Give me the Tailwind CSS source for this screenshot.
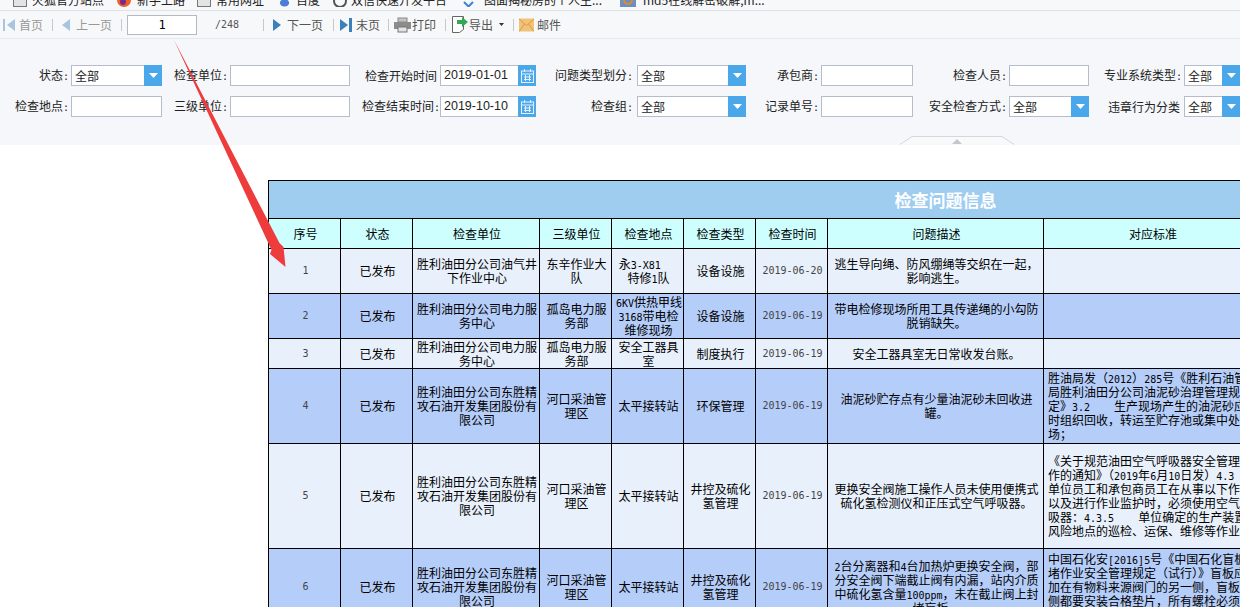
<!DOCTYPE html>
<html lang="zh-CN">

<head>
    <meta charset="UTF-8">
    <title>检查问题信息</title>
    <script src="https://cdn.jsdelivr.net/npm/@tailwindcss/browser@4"></script>
</head>

<body class="font-['Noto_Sans_CJK_SC','Liberation_Sans',sans-serif] bg-white text-black">

    <div class="relative w-[1240px] h-[607px] overflow-hidden">

        <!-- bookmarks bar, cut off by the top of the picture -->
        <div class="h-[11px] bg-[#f7f8fa] border-b border-[#dfe1e5] overflow-hidden">
            <div class="flex items-center h-[14px] -mt-[7px] text-xs leading-[14px] text-[#222] whitespace-nowrap">
                <span class="ml-[13px] w-[14px] h-[13px] bg-[#e3e3e3] border border-[#777]"></span>
                <span class="ml-[5px] w-[85px]">火狐官方站点</span>
                <svg class="w-[14px] h-[14px]" viewBox="0 0 14 14"><circle cx="7" cy="7" r="7" fill="#e8632a"/><circle cx="6" cy="9" r="3" fill="#7b2a8c"/></svg>
                <span class="ml-[6px] w-[60px]">新手上路</span>
                <span class="w-[14px] h-[13px] bg-[#e3e3e3] border border-[#777]"></span>
                <span class="ml-[5px] w-[62px]">常用网址</span>
                <svg class="w-[13px] h-[14px]" viewBox="0 0 14 14"><ellipse cx="7" cy="10" rx="5" ry="4" fill="#4a7fd8"/></svg>
                <span class="ml-[5px] w-[36px]">百度</span>
                <svg class="w-[16px] h-[14px]" viewBox="0 0 16 14"><circle cx="8" cy="8" r="6" fill="none" stroke="#555" stroke-width="2"/></svg>
                <span class="ml-[3px] w-[112px]">双信快速开发平台</span>
                <svg class="w-[11px] h-[14px]" viewBox="0 0 11 14"><path d="M1 9l4.500 4.500L10 9" fill="none" stroke="#3b82d6" stroke-width="2"/></svg>
                <span class="ml-[10px] w-[136px]">图面揭秘房的个人主...</span>
                <span class="w-[16px] h-[13px] bg-[#6d8fc0] flex items-center justify-center"><span class="w-[10px] h-[10px] rounded-full border-2 border-[#e58a2a]"></span></span>
                <span class="ml-[7px]">md5在线解密破解,m...</span>
            </div>
        </div>

        <!-- paging toolbar -->
        <div class="flex items-center h-[28px] bg-[#f7f8fa] border-b border-[#e6e8eb] text-xs leading-none text-[#555]">
            <svg class="ml-[3px] w-[12px] h-[14px]" viewBox="0 0 12 14"><rect x="0" y="1" width="2" height="12" fill="#a9c4de"/><path d="M12 1v12L4 7z" fill="#a9c4de"/></svg>
            <span class="ml-[4px] text-[#999]">首页</span>
            <span class="ml-[9px] w-px h-[12px] bg-[#c8c8c8]"></span>
            <svg class="ml-[9px] w-[8px] h-[14px]" viewBox="0 0 8 14"><path d="M8 1v12L0 7z" fill="#a9c4de"/></svg>
            <span class="ml-[6px] text-[#999]">上一页</span>
            <span class="ml-[9px] w-px h-[12px] bg-[#c8c8c8]"></span>
            <div class="ml-[5px] w-[70px] h-[20px] bg-white border border-[#b5b9c2] flex items-center justify-center font-['DejaVu_Sans_Mono',monospace] text-xs text-black">1</div>
            <span class="ml-[18px] w-[48px] font-['DejaVu_Sans_Mono',monospace] text-[10px]">/248</span>
            <span class="w-px h-[12px] bg-[#c8c8c8]"></span>
            <svg class="ml-[9px] w-[8px] h-[14px]" viewBox="0 0 8 14"><path d="M0 1v12l8-6z" fill="#3d7fb9"/></svg>
            <span class="ml-[6px]">下一页</span>
            <span class="ml-[10px] w-px h-[12px] bg-[#c8c8c8]"></span>
            <svg class="ml-[6px] w-[12px] h-[14px]" viewBox="0 0 12 14"><path d="M0 1v12l8-6z" fill="#3d7fb9"/><rect x="9" y="0" width="3" height="14" fill="#3d7fb9"/></svg>
            <span class="ml-[4px]">末页</span>
            <span class="ml-[8px] w-px h-[12px] bg-[#c8c8c8]"></span>
            <svg class="ml-[5px] w-[17px] h-[16px]" viewBox="0 0 17 16"><rect x="4" y="1" width="9" height="4" fill="#c4c4c4" stroke="#888"/><rect x="0" y="5" width="17" height="7" fill="#8c8c8c"/><rect x="4" y="10" width="9" height="5" fill="#e4e4e4" stroke="#777"/></svg>
            <span class="ml-[1px]">打印</span>
            <span class="ml-[9px] w-px h-[12px] bg-[#c8c8c8]"></span>
            <svg class="ml-[5px] w-[18px] h-[19px]" viewBox="0 0 18 19"><path d="M1.500 1.500h11v13l-4 3h-7z" fill="#fff" stroke="#666"/><path d="M6 5h5V2l6 5-6 5V9H6z" fill="#35a853"/></svg>
            <span>导出</span>
            <svg class="ml-[6px] w-[5px] h-[3px]" viewBox="0 0 5 3"><path d="M0 0h5L2.500 3z" fill="#333"/></svg>
            <span class="ml-[9px] w-px h-[12px] bg-[#c8c8c8]"></span>
            <svg class="ml-[5px] w-[15px] h-[14px]" viewBox="0 0 15 14"><rect x="0" y="0.500" width="15" height="13" fill="#f1c27a"/><path d="M0 1l7.500 6.500L15 1M0 13.500l5.500-7.500M15 13.500l-5.500-7.500" fill="none" stroke="#e29a3c"/></svg>
            <span class="ml-[3px]">邮件</span>
        </div>

        <!-- filter panel -->
        <div class="relative h-[106px] bg-[#f5f7fa] pt-[26px] text-xs leading-none text-[#222]">
            <div class="grid grid-cols-[71px_91px_68px_120px_90px_96px_101px_109px_75px_92px_96px_80px_95px_56px] auto-rows-[21px] gap-y-[10px] items-center" id="filters"></div>

            <svg class="absolute left-[900px] bottom-0 w-[114px] h-[9px]" viewBox="0 0 114 9"><path d="M0 8.500L12 .5h90l12 8" fill="#f8f9fb" stroke="#d5d7da"/><path d="M57 3l5 5H52z" fill="#c5c7ca"/></svg>
        </div>

        <!-- results table -->
        <div class="ml-[268px] mt-[35px] w-[1354px]">
            <table class="table-fixed w-[1354px] border-collapse border border-black text-xs leading-[14px] text-center">
                <colgroup>
                    <col class="w-[72px]"><col class="w-[72px]"><col class="w-[127px]"><col class="w-[72px]"><col class="w-[72px]"><col class="w-[72px]"><col class="w-[72px]"><col class="w-[216px]"><col class="w-[217px]"><col class="w-[362px]">
                </colgroup>
                <thead>
                    <tr class="h-[38px] bg-[#9fcdf0]">
                        <th colspan="10" class="border border-black text-[17px] font-bold text-white">检查问题信息</th>
                    </tr>
                    <tr class="h-[30px] bg-[#ccfffe]">
                        <th class="border border-black font-normal pl-[4px] pr-[2px]">序号</th>
                        <th class="border border-black font-normal pl-[4px] pr-[2px]">状态</th>
                        <th class="border border-black font-normal pl-[4px] pr-[2px]">检查单位</th>
                        <th class="border border-black font-normal pl-[4px] pr-[2px]">三级单位</th>
                        <th class="border border-black font-normal pl-[4px] pr-[2px]">检查地点</th>
                        <th class="border border-black font-normal pl-[4px] pr-[2px]">检查类型</th>
                        <th class="border border-black font-normal pl-[4px] pr-[2px]">检查时间</th>
                        <th class="border border-black font-normal pl-[4px] pr-[2px]">问题描述</th>
                        <th class="border border-black font-normal pl-[4px] pr-[2px]">对应标准</th>
                        <th class="border border-black font-normal pl-[4px] pr-[2px]">整改要求</th>
                    </tr>
                </thead>
                <tbody id="rows"></tbody>
            </table>
        </div>

        <!-- red annotation arrow drawn over the page -->
        <svg class="absolute left-0 top-0 pointer-events-none" width="1240" height="607" viewBox="0 0 1240 607">
            <path d="M174 40L279.500 243L283.500 247L285.500 267L270 254L271.500 250z" fill="#ee3b3b"/>
        </svg>
    </div>

    <script>
        // digits and latin letters are half the width of the Chinese text
        const en = (s) => `<span class="font-['DejaVu_Sans_Mono',monospace] text-[10px] leading-[10px]">${s}</span>`

        // === Filter panel ===
        const label = (text, pad = 'pr-[2px]') => `<div class="text-right ${pad} whitespace-nowrap">${text}</div>`
        const input = () => `<div class="h-[21px] bg-white border border-[#b5bccb]"></div>`
        const select = () => `<div class="h-[21px] flex bg-white border border-[#b5bccb]">
                <span class="flex-1 pl-[3px] leading-[19px] overflow-hidden">全部</span>
                <span class="w-[18px] -my-px -mr-px bg-[#4aa8ea] flex items-center justify-center"><svg class="w-[9px] h-[5px]" viewBox="0 0 9 5"><path d="M0 0h9L4.500 5z" fill="#fff"/></svg></span>
            </div>`
        const date = (value) => `<div class="h-[21px] flex bg-white border border-[#b5bccb]">
                <span class="flex-1 pl-[3px] leading-[19px] font-['Liberation_Sans',sans-serif] text-[12.500px]">${value}</span>
                <span class="w-[18px] -my-px -mr-px bg-[#4aa8ea] flex items-center justify-center"><svg class="w-[13px] h-[14px]" viewBox="0 0 13 14"><rect x=".5" y="2" width="12" height="11.500" fill="none" stroke="#e3f1fc"/><path d="M0 5h13M3 8h7M3 10.500h7M4.500 6v6M8.500 6v6M3.500 0v3M9.500 0v3" stroke="#e3f1fc"/></svg></span>
            </div>`
        const colon = en(':')

        document.getElementById('filters').innerHTML = [
            label('状态' + colon), select(), label('检查单位' + colon), input(), label('检查开始时间', 'pr-[3px]'), date('2019-01-01'),
            label('问题类型划分' + colon, 'pr-[4px]'), select(), label('承包商' + colon), input(), label('检查人员' + colon), input(), label('专业系统类型' + colon), select(),
            label('检查地点' + colon), input(), label('三级单位' + colon), input(), label('检查结束时间' + colon, 'pr-0'), date('2019-10-10'),
            label('检查组' + colon, 'pr-[4px]'), select(), label('记录单号' + colon), input(), label('安全检查方式' + colon), select(), label('违章行为分类', 'pr-[4px]'), select(),
        ].join('')

        // === Table rows ===
        const rows = [
            [45, '胜利油田分公司油气井下作业中心', '东辛作业大队', `永${en('3-X81')}　&nbsp;&nbsp;<br>特修${en('1')}队`, '设备设施', '2019-06-20', '逃生导向绳、防风绷绳等交织在一起，影响逃生。', ''],
            [45, '胜利油田分公司电力服务中心', '孤岛电力服务部', `<span class="whitespace-nowrap">${en('6KV')}供热甲线</span><br>${en('3168')}带电检<br>维修现场`, '设备设施', '2019-06-19', '带电检修现场所用工具传递绳的小勾防脱销缺失。', ''],
            [30, '胜利油田分公司电力服务中心', '孤岛电力服务部', '安全工器具室', '制度执行', '2019-06-19', '安全工器具室无日常收发台账。', ''],
            [75, '胜利油田分公司东胜精攻石油开发集团股份有限公司', '河口采油管理区', '太平接转站', '环保管理', '2019-06-19', '油泥砂贮存点有少量油泥砂未回收进罐。',
                `胜油局发（${en('2012')}）${en('285')}号《胜利石油管理<br>局胜利油田分公司油泥砂治理管理规<br>定》${en('3.2')}　　生产现场产生的油泥砂应及<br>时组织回收，转运至贮存池或集中处理<br>场；`],
            [105, '胜利油田分公司东胜精攻石油开发集团股份有限公司', '河口采油管理区', '太平接转站', '井控及硫化氢管理', '2019-06-19', '更换安全阀施工操作人员未使用便携式硫化氢检测仪和正压式空气呼吸器。',
                `《关于规范油田空气呼吸器安全管理工<br>作的通知》（${en('2019')}年${en('6')}月${en('10')}日发）${en('4.3')}<br>单位员工和承包商员工在从事以下作业<br>以及进行作业监护时，必须使用空气呼<br>吸器：${en('4.3.5')}　　单位确定的生产装置<br>风险地点的巡检、运保、维修等作业`],
            [76, '胜利油田分公司东胜精攻石油开发集团股份有限公司', '河口采油管理区', '太平接转站', '井控及硫化氢管理', '2019-06-19', `${en('2')}台分离器和${en('4')}台加热炉更换安全阀，部分安全阀下端截止阀有内漏，站内介质中硫化氢含量${en('100ppm')}，未在截止阀上封堵盲板。`,
                `中国石化安${en('[2016]5')}号《中国石化盲板<br>堵作业安全管理规定（试行）》盲板应<br>加在有物料来源阀门的另一侧，盲板两<br>侧都要安装合格垫片，所有螺栓必须上<br>紧`],
        ]

        const cell = 'border border-black pl-[4px] pr-[2px] py-0'
        document.getElementById('rows').innerHTML = rows.map((r, i) => `
            <tr class="${i % 2 ? 'bg-[#b5cdf9]' : 'bg-[#e8f0fb]'}" style="height:${r[0]}px">
                <td class="${cell} font-['DejaVu_Sans_Mono',monospace] text-[10px] text-[#444]">${i + 1}</td>
                <td class="${cell}">已发布</td>
                <td class="${cell}">${r[1]}</td>
                <td class="${cell}">${r[2]}</td>
                <td class="${cell}">${r[3]}</td>
                <td class="${cell}">${r[4]}</td>
                <td class="${cell} font-['DejaVu_Sans_Mono',monospace] text-[10px] text-[#444]">${r[5]}</td>
                <td class="${cell}">${r[6]}</td>
                <td class="${cell} text-left whitespace-nowrap overflow-hidden">${r[7]}</td>
                <td class="${cell}"></td>
            </tr>`).join('')
    </script>
</body>

</html>
